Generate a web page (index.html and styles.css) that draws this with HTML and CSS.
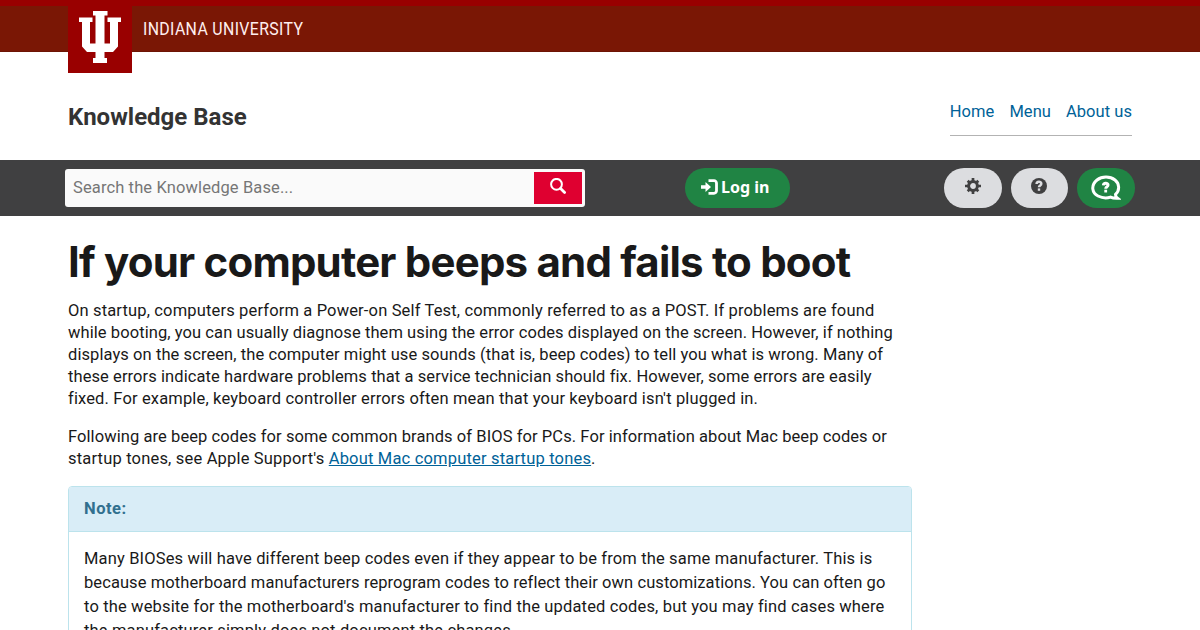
FILE: index.html
```html
<!DOCTYPE html>
<html lang="en">
<head>
    <meta charset="utf-8">
    <title>If your computer beeps and fails to boot</title>
    <link rel="stylesheet" href="styles.css">
</head>
<body>
    <header class="branding-bar">
        <div class="container branding">
            <a class="trident" href="#">
                <svg width="64" height="73" viewBox="0 0 64 73" fill="#fff">
                    <path d="M25 11h14.500v4.500h-3v28h5.500V22h-2.500v-4.500H53V22h-3v24.500L45 52h-8.500v6H39v5H25v-5h2.500v-6H19L14 46.500V22h-3v-4.500h13.500V22H22v21.500h5.500v-28H25z"/>
                </svg>
            </a>
            <span class="campus">INDIANA UNIVERSITY</span>
        </div>
    </header>

    <div class="container site-header">
        <div class="site-title">Knowledge Base</div>
        <nav class="site-nav">
            <a href="#">Home</a>
            <a href="#">Menu</a>
            <a href="#">About us</a>
        </nav>
    </div>

    <div class="toolbar">
        <form class="search">
            <input class="search-input" type="text" placeholder="Search the Knowledge Base...">
            <button class="search-button" type="button" aria-label="Search">
                <svg width="16" height="16" viewBox="0 0 16 16" fill="none" stroke="#fff">
                    <circle cx="6.500" cy="6.300" r="5.400" stroke-width="2"/>
                    <path d="M10.600 10.400l4 4" stroke-width="2.800" stroke-linecap="round"/>
                </svg>
            </button>
        </form>
        <a class="login" href="#">
            <svg width="17" height="16" viewBox="0 0 17 16">
                <path d="M0 6.200h4.500V3L10 8l-5.500 5V9.800H0z" fill="#fff"/>
                <path d="M7.500 1.700h5.500a2.500 2.500 0 0 1 2.500 2.500v7.600a2.500 2.500 0 0 1-2.500 2.500H7.500" fill="none" stroke="#fff" stroke-width="2.800"/>
            </svg>
            <span>Log in</span>
        </a>
        <div class="tools">
            <a class="tool" href="#">
                <svg width="16" height="16" viewBox="0 0 16 16">
                    <circle cx="8" cy="8" r="4.400" fill="none" stroke="#404041" stroke-width="3"/>
                    <path d="M8 0v3M8 13v3M0 8h3M13 8h3M2.700 2.700l2 2M11.300 11.300l2 2M2.700 13.300l2-2M11.300 4.700l2-2" stroke="#404041" stroke-width="2.700"/>
                </svg>
            </a>
            <a class="tool tool-help" href="#">
                <svg width="16" height="16" viewBox="0 0 16 16">
                    <circle cx="8" cy="8" r="8" fill="#404041"/>
                    <path d="M5.600 5.900C5.600 3 10.300 3 10.300 5.700c0 1.900-2.300 1.800-2.300 3.600" fill="none" stroke="#dcdde0" stroke-width="2.500"/>
                    <path d="M6.800 10.400h2.400v2.400H6.800z" fill="#dcdde0"/>
                </svg>
            </a>
            <a class="tool tool-chat" href="#">
                <svg width="30" height="26" viewBox="0 0 30 26" fill="none" stroke="#fff">
                    <path d="M24.500 19.400C29 15.500 28.500 8.500 24 5 19 1 11 1 6 5-.5 10.500 1 18 7 21c4 2 9 2.300 12.500 1.100 2 1 4.500 1.300 7 1.200-1.300-1-2-2.200-2-3.900z" stroke-width="3"/>
                    <path d="M12.300 10.300c.2-2.600 4.800-2.600 4.800-.3 0 1.800-2.400 1.700-2.400 3.700" stroke-width="2.900"/>
                    <path d="M13.300 14.700h2.800v2.800h-2.800z" fill="#fff" stroke="none"/>
                </svg>
            </a>
        </div>
    </div>

    <main class="container">
        <article class="content">
            <h1>If your computer beeps and fails to boot</h1>
            <p>
                <span class="line loose">On startup, computers perform a Power-on Self Test, commonly referred to as a POST. If problems are found</span>
                <span class="line">while booting, you can usually diagnose them using the error codes displayed on the screen. However, if nothing</span>
                <span class="line">displays on the screen, the computer might use sounds (that is, beep codes) to tell you what is wrong. Many of</span>
                <span class="line">these errors indicate hardware problems that a service technician should fix. However, some errors are easily</span>
                <span class="line loose">fixed. For example, keyboard controller errors often mean that your keyboard isn't plugged in.</span>
            </p>
            <p>
                <span class="line">Following are beep codes for some common brands of BIOS for PCs. For information about Mac beep codes or</span>
                <span class="line looser">startup tones, see Apple Support's <a href="#">About Mac computer startup tones</a>.</span>
            </p>
            <section class="panel">
                <div class="panel-heading">Note:</div>
                <div class="panel-body">
                    <span class="line loose">Many BIOSes will have different beep codes even if they appear to be from the same manufacturer. This is</span>
                    <span class="line">because motherboard manufacturers reprogram codes to reflect their own customizations. You can often go</span>
                    <span class="line loose">to the website for the motherboard's manufacturer to find the updated codes, but you may find cases where</span>
                    <span class="line loose">the manufacturer simply does not document the changes.</span>
                </div>
            </section>
        </article>
    </main>
</body>
</html>
```

FILE: styles.css
```css
* {
    box-sizing: border-box;
}
body {
    margin: 0;
    height: 630px;
    overflow: hidden;
    background: #fff;
    color: #191919;
    font-family: Roboto, "Liberation Sans", sans-serif;
    font-size: 16.5px;
    line-height: 22px;
}
a {
    color: #006298;
}
svg {
    display: block;
}
.container {
    padding: 0 68px;
}
.branding-bar {
    height: 52px;
    background: #7a1705;
    border-top: 6px solid #900;
    border-bottom: 1px solid #6d1404;
}
.branding {
    display: flex;
}
.trident {
    height: 73px;
    margin-top: -6px;
    background: #900;
}
.campus {
    margin: 12px 0 0 11px;
    color: #fee;
    font-size: 17.5px;
    font-weight: 400;
    letter-spacing: 0.4px;
    transform: scaleX(0.905);
    transform-origin: left;
}
.site-header {
    display: flex;
    justify-content: space-between;
    height: 108px;
}
.site-title {
    margin-top: 50px;
    color: #333;
    font-size: 24px;
    font-weight: 700;
    line-height: 30px;
}
.site-nav {
    display: flex;
    gap: 15px;
    height: 84px;
    padding-top: 49px;
    border-bottom: 1px solid #b3b3b3;
}
.site-nav a {
    text-decoration: none;
    letter-spacing: 0.05px;
}
.toolbar {
    display: flex;
    align-items: center;
    height: 56px;
    padding: 0 65px;
    background: #404041;
}
.search {
    display: flex;
    width: 520px;
    height: 38px;
    margin-right: 100px;
    padding: 3px;
    background: #fafafa;
    border-radius: 3px;
}
.search-input {
    flex: 1;
    padding: 0 5px;
    border: 0;
    background: transparent;
    font: inherit;
    letter-spacing: 0.12px;
}
.search-input::placeholder {
    color: #767676;
}
.search-button {
    display: flex;
    justify-content: center;
    width: 48px;
    padding: 6px 0 0;
    border: 0;
    background: #df0030;
}
.login {
    display: flex;
    align-items: center;
    gap: 3px;
    width: 105px;
    height: 40px;
    padding: 0 0 2px 16px;
    border-radius: 20px;
    background: #208444;
    color: #fff;
    font-family: "Noto Sans", sans-serif;
    font-size: 16px;
    font-weight: 700;
    text-decoration: none;
}
.tools {
    display: flex;
    gap: 9px;
    margin-left: auto;
}
.tool {
    display: flex;
    justify-content: center;
    width: 57.67px;
    height: 40px;
    padding-top: 10px;
    border-radius: 20px;
    background: #dcdde0;
}
.tool-help {
    padding-right: 2px;
}
.tool-chat {
    padding-top: 7px;
    background: #208444;
}
.content {
    width: 844px;
}
h1 {
    margin: 22px 0 14px;
    font-family: Inter, sans-serif;
    font-size: 42px;
    font-weight: 700;
    letter-spacing: -0.8px;
    line-height: 48px;
    white-space: nowrap;
}
p {
    margin: 0 0 16px;
}
.line {
    display: block;
    width: max-content;
    letter-spacing: 0.08px;
    white-space: nowrap;
}
.loose {
    letter-spacing: 0.15px;
}
.looser {
    letter-spacing: 0.18px;
}
.panel {
    height: 180px;
    border: 1px solid #bce3ec;
    border-radius: 4px;
}
.panel-heading {
    height: 45px;
    padding: 11px 15px;
    border-bottom: 1px solid #bce3ec;
    border-radius: 3px 3px 0 0;
    background: #d9edf7;
    color: #31708f;
    font-weight: 700;
    letter-spacing: 0.5px;
}
.panel-body {
    padding: 15px;
    line-height: 24px;
}
```
